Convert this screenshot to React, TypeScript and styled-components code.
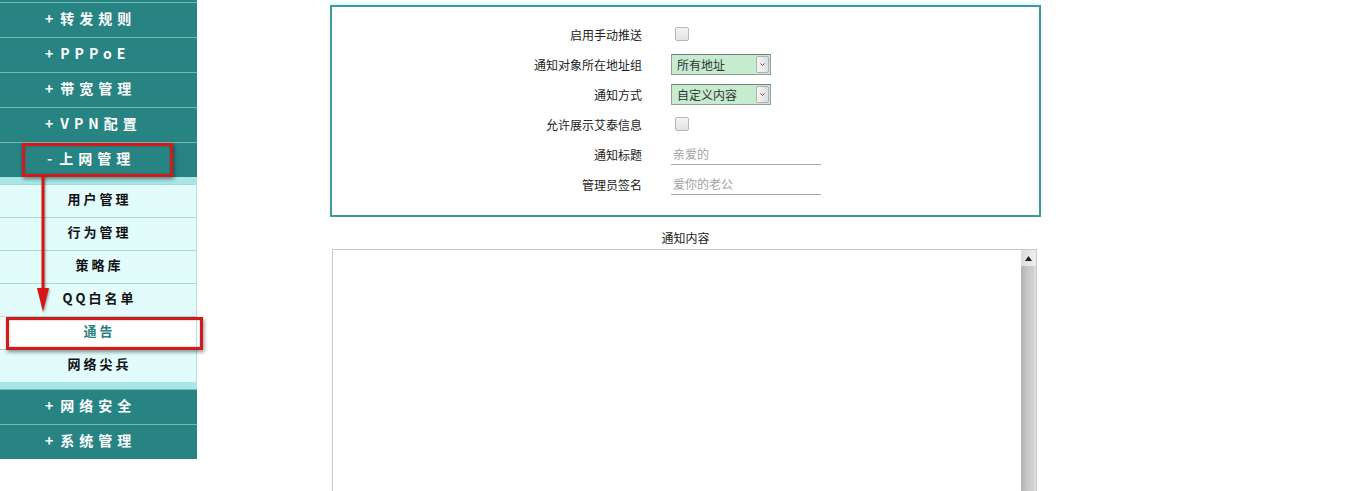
import React from 'react';
import styled, { createGlobalStyle } from 'styled-components';

const GlobalStyle = createGlobalStyle`
  html, body {
    margin: 0;
    padding: 0;
    background: #ffffff;
    overflow: hidden;
  }
  body {
    font-family: "Noto Sans CJK SC", "Noto Sans", sans-serif;
  }
`;

const Page = styled.div`
  display: flex;
  align-items: flex-start;
  width: 1345px;
  height: 491px;
  overflow: hidden;
`;

const SideWrap = styled.div`
  position: relative;
  width: 197px;
  flex: 0 0 197px;
`;

const SideBar = styled.div`
  display: flex;
  flex-direction: column;
`;

// the list is scrolled: only the last 2px of the item above shows
const Stub = styled.div`
  height: 2px;
  background: #288383;
`;

const MenuHead = styled.div<{ $spacing?: number; $indent?: number }>`
  box-sizing: border-box;
  height: 35px;
  border-top: 1px solid #74b8b8;
  background: #288383;
  color: #ffffff;
  display: flex;
  align-items: center;
  padding: 0 0 5px ${(p) => p.$indent ?? 45}px;
  font-size: 14px;
  font-weight: 700;
  letter-spacing: ${(p) => p.$spacing ?? 5}px;
  white-space: nowrap;
`;

const Sign = styled.span`
  margin-right: 7px;
  letter-spacing: 0;
`;

const Band = styled.div`
  height: 7px;
  background: #a9e7e7;
`;

const SubItem = styled.div<{ $active?: boolean }>`
  box-sizing: border-box;
  height: 33px;
  border-top: 1px solid ${(p) => (p.$active ? '#b5dede' : '#a9d6d6')};
  border-right: 1px solid #b8dede;
  background: ${(p) => (p.$active ? '#ffffff' : '#e2fcfc')};
  color: ${(p) => (p.$active ? '#2a7f7f' : '#111111')};
  display: flex;
  align-items: center;
  justify-content: center;
  padding: 0 0 6px 3px;
  font-size: 13px;
  font-weight: 700;
  letter-spacing: 3px;
  white-space: nowrap;
`;

const Callout = styled.div<{ $left: number; $top: number; $w: number; $h: number }>`
  position: absolute;
  left: ${(p) => p.$left}px;
  top: ${(p) => p.$top}px;
  width: ${(p) => p.$w}px;
  height: ${(p) => p.$h}px;
  box-sizing: border-box;
  border: 3px solid #d11a1a;
  box-shadow: 1px 2px 4px rgba(0, 0, 0, 0.45), inset 0 0 2px rgba(120, 0, 0, 0.4);
  pointer-events: none;
`;

const ArrowSvg = styled.svg`
  position: absolute;
  left: 34px;
  top: 176px;
  pointer-events: none;
  filter: drop-shadow(1px 1px 1px rgba(0, 0, 0, 0.35));
`;

const Main = styled.div`
  margin-left: 133px;
  width: 711px;
  display: flex;
  flex-direction: column;
  padding-top: 5px;
`;

const FormBox = styled.div`
  box-sizing: border-box;
  height: 212px;
  border: 2px solid #3e9a9a;
  box-shadow: 0 -3px 0 #e6fbfb;
  padding: 12px 0 0;
  display: flex;
  flex-direction: column;
`;

const Row = styled.div`
  height: 30px;
  display: grid;
  grid-template-columns: 310px 340px;
  column-gap: 29px;
  align-items: center;
`;

const Label = styled.div`
  text-align: right;
  font-size: 12px;
  color: #222222;
`;

const Check = styled.span`
  display: inline-block;
  width: 12px;
  height: 12px;
  margin: 2px 0 0 4px;
  border: 1px solid #b8b8b8;
  border-radius: 2px;
  background: linear-gradient(#f4f4f4, #e2e2e2);
`;

const Select = styled.div`
  box-sizing: border-box;
  width: 100px;
  height: 21px;
  border: 1px solid #9a9a9a;
  border-top-color: #7c7c7c;
  background: #c6ecd0;
  display: flex;
  align-items: center;
  padding: 1px;
`;

const SelectText = styled.span`
  flex: 1;
  padding-left: 4px;
  font-size: 12px;
  color: #333333;
`;

const SelectBtn = styled.span`
  box-sizing: border-box;
  width: 13px;
  height: 17px;
  border: 1px solid #b0b0b0;
  border-radius: 2px;
  background: linear-gradient(90deg, #f6f6f6, #dedede);
  display: flex;
  align-items: center;
  justify-content: center;
`;

const TextInput = styled.input`
  box-sizing: border-box;
  width: 150px;
  height: 22px;
  border: none;
  border-bottom: 1px solid #a8a8a8;
  outline: none;
  background: transparent;
  padding: 0 2px;
  font-family: "Noto Sans CJK SC", "Noto Sans", sans-serif;
  font-size: 12px;
  &::placeholder {
    color: #a2a2a2;
  }
`;

const ContentTitle = styled.div`
  margin-top: 13px;
  text-align: center;
  font-size: 12px;
  color: #222222;
  line-height: 16px;
`;

const EditorWrap = styled.div`
  margin: 3px 4px 0 2px;
  height: 260px;
  border: 1px solid #c8c8c8;
  display: flex;
`;

const Editor = styled.textarea`
  flex: 1;
  border: none;
  outline: none;
  resize: none;
  background: #ffffff;
`;

const ScrollBar = styled.div`
  width: 15px;
  display: flex;
  flex-direction: column;
  background: linear-gradient(90deg, #b2b2b2 0%, #c6c6c6 40%, #d2d2d2 85%, #e4e4e4 100%);
`;

const ScrollUp = styled.div`
  height: 16px;
  display: flex;
  align-items: center;
  justify-content: center;
  background: linear-gradient(90deg, #dcdcdc, #eeeeee);
`;

type Sub = { label: string; active?: boolean };

const subs: Sub[] = [
  { label: '用户管理' },
  { label: '行为管理' },
  { label: '策略库' },
  { label: 'QQ白名单' },
  { label: '通告', active: true },
  { label: '网络尖兵' },
];

const Caret = () => (
  <svg width="5" height="3" viewBox="0 0 5 3">
    <polyline points="0.5,0.5 2.5,2.5 4.5,0.5" fill="none" stroke="#555" strokeWidth="1" />
  </svg>
);

export default function App() {
  return (
    <Page>
      <GlobalStyle />
      <SideWrap>
        <SideBar>
          <Stub />
          <MenuHead><Sign>+</Sign>转发规则</MenuHead>
          <MenuHead $spacing={5}><Sign>+</Sign>PPPoE</MenuHead>
          <MenuHead><Sign>+</Sign>带宽管理</MenuHead>
          <MenuHead $spacing={5}><Sign>+</Sign>VPN配置</MenuHead>
          <MenuHead $indent={47}><Sign>-</Sign>上网管理</MenuHead>
          <Band />
          {subs.map((s) => (
            <SubItem key={s.label} $active={s.active}>{s.label}</SubItem>
          ))}
          <Band />
          <MenuHead><Sign>+</Sign>网络安全</MenuHead>
          <MenuHead><Sign>+</Sign>系统管理</MenuHead>
        </SideBar>
        <Callout $left={22} $top={143} $w={151} $h={34} />
        <Callout $left={6} $top={317} $w={197} $h={33} />
        <ArrowSvg width="18" height="140" viewBox="0 0 18 140">
          <rect x="7.5" y="0" width="3" height="114" fill="#d61616" />
          <polygon points="3,112 15,112 9,136" fill="#d61616" />
        </ArrowSvg>
      </SideWrap>
      <Main>
        <FormBox>
          <Row>
            <Label>启用手动推送</Label>
            <div><Check /></div>
          </Row>
          <Row>
            <Label>通知对象所在地址组</Label>
            <Select>
              <SelectText>所有地址</SelectText>
              <SelectBtn><Caret /></SelectBtn>
            </Select>
          </Row>
          <Row>
            <Label>通知方式</Label>
            <Select>
              <SelectText>自定义内容</SelectText>
              <SelectBtn><Caret /></SelectBtn>
            </Select>
          </Row>
          <Row>
            <Label>允许展示艾泰信息</Label>
            <div><Check /></div>
          </Row>
          <Row>
            <Label>通知标题</Label>
            <TextInput placeholder="亲爱的" />
          </Row>
          <Row>
            <Label>管理员签名</Label>
            <TextInput placeholder="爱你的老公" />
          </Row>
        </FormBox>
        <ContentTitle>通知内容</ContentTitle>
        <EditorWrap>
          <Editor />
          <ScrollBar>
            <ScrollUp>
              <svg width="7" height="5" viewBox="0 0 7 5">
                <polygon points="0,5 7,5 3.5,0" fill="#222" />
              </svg>
            </ScrollUp>
          </ScrollBar>
        </EditorWrap>
      </Main>
    </Page>
  );
}
